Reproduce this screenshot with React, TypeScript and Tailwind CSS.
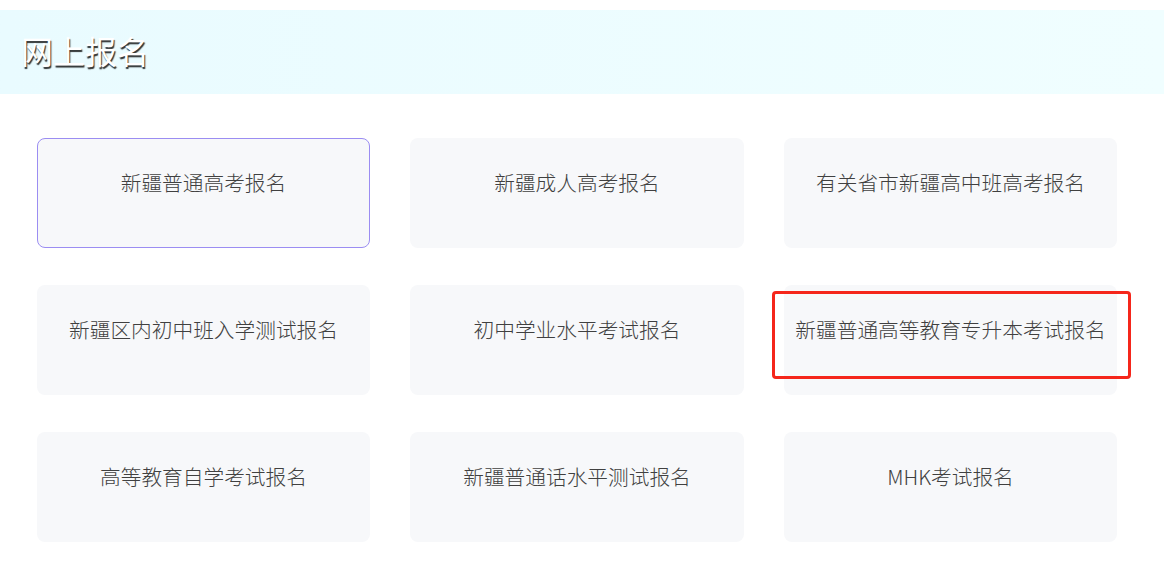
import React from "react";

const items = [
  "新疆普通高考报名",
  "新疆成人高考报名",
  "有关省市新疆高中班高考报名",
  "新疆区内初中班入学测试报名",
  "初中学业水平考试报名",
  "新疆普通高等教育专升本考试报名",
  "高等教育自学考试报名",
  "新疆普通话水平测试报名",
  "MHK考试报名",
];

export default function App() {
  return (
    <div
      className="w-[1164px] h-[567px] bg-white overflow-hidden"
      style={{ fontFamily: '"Microsoft YaHei", "Noto Sans CJK SC", "Noto Sans", sans-serif' }}
    >
      <div className="mt-[10px] h-[84px] bg-gradient-to-r from-[#e9fbff] to-[#f0feff] flex items-center pl-[21px]">
        <h1 className="text-[32px] leading-none font-normal text-white [text-shadow:1px_2px_1px_rgba(0,0,0,0.8)] pb-[4px]">
          网上报名
        </h1>
      </div>
      <div className="grid grid-cols-[333px_334px_333px] gap-x-[40px] gap-y-[37px] pl-[37px] pt-[44px]">
        {items.map((t, i) => (
          <div
            key={t}
            className={
              i === 0
                ? "relative h-[110px] rounded-[8px] bg-[#f7f8fa] border border-[#9b8df2] flex justify-center pt-[27px]"
                : "relative h-[110px] rounded-[8px] bg-[#f7f8fa] border border-transparent flex justify-center pt-[27px]"
            }
          >
            <span className="text-[20.7px] leading-[32px] font-light text-[#404040] whitespace-nowrap">{t}</span>
            {i === 5 && (
              <div className="absolute left-[-13px] top-[5px] w-[359px] h-[88px] border-[3px] border-[#f5261b] rounded-[4px]" />
            )}
          </div>
        ))}
      </div>
    </div>
  );
}
